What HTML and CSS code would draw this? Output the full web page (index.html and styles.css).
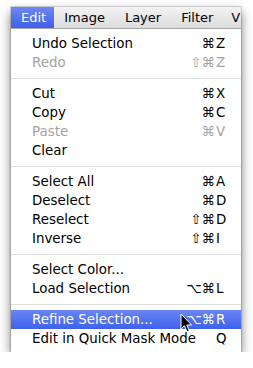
FILE: index.html
```html
<!DOCTYPE html>
<html>
<head>
<meta charset="utf-8">
<link rel="stylesheet" href="styles.css">
</head>
<body>
<div class="window">
  <div class="bar">
    <span class="title active">Edit</span>
    <span class="title">Image</span>
    <span class="title">Layer</span>
    <span class="title">Filter</span>
    <span class="title last">V</span>
  </div>
  <ul class="menu">
    <li class="item"><span class="label">Undo Selection</span><span class="sc"><span class="mods">⌘</span><span class="key">Z</span></span></li>
    <li class="item disabled"><span class="label">Redo</span><span class="sc"><span class="mods">⇧⌘</span><span class="key">Z</span></span></li>
    <li class="sep"></li>
    <li class="item"><span class="label">Cut</span><span class="sc"><span class="mods">⌘</span><span class="key">X</span></span></li>
    <li class="item"><span class="label">Copy</span><span class="sc"><span class="mods">⌘</span><span class="key">C</span></span></li>
    <li class="item disabled"><span class="label">Paste</span><span class="sc"><span class="mods">⌘</span><span class="key">V</span></span></li>
    <li class="item"><span class="label">Clear</span></li>
    <li class="sep"></li>
    <li class="item"><span class="label">Select All</span><span class="sc"><span class="mods">⌘</span><span class="key">A</span></span></li>
    <li class="item"><span class="label">Deselect</span><span class="sc"><span class="mods">⌘</span><span class="key">D</span></span></li>
    <li class="item"><span class="label">Reselect</span><span class="sc"><span class="mods">⇧⌘</span><span class="key">D</span></span></li>
    <li class="item"><span class="label">Inverse</span><span class="sc"><span class="mods">⇧⌘</span><span class="key">I</span></span></li>
    <li class="sep"></li>
    <li class="item"><span class="label">Select Color...</span></li>
    <li class="item"><span class="label">Load Selection</span><span class="sc"><span class="mods">⌥⌘</span><span class="key">L</span></span></li>
    <li class="sep"></li>
    <li class="item selected"><span class="label">Refine Selection...</span><span class="sc"><span class="mods">⌥⌘</span><span class="key">R</span></span>
      <svg class="cursor" width="13" height="21" viewBox="0 0 13 21"><path d="M1 1 L1 16 L4.5 12.8 L7 18.8 L9.3 17.8 L6.9 12 L11.5 12 Z" fill="#000" stroke="#fff" stroke-width="1" stroke-linejoin="round"/></svg>
    </li>
    <li class="item"><span class="label">Edit in Quick Mask Mode</span><span class="sc"><span class="mods"></span><span class="key">Q</span></span></li>
  </ul>
</div>
</body>
</html>
```
FILE: styles.css
```css
html, body {
  margin: 0;
  padding: 0;
  background: #ffffff;
}
body {
  padding: 7px 0 0 11px;
  font-family: "DejaVu Sans", "Liberation Sans", sans-serif;
  font-size: 13.4px;
  color: #000;
}
.window {
  width: 230px;
  box-shadow: 0 0 0 1px rgba(0,0,0,0.14), 0 5px 10px rgba(0,0,0,0.55);
  background: #fff;
}
.bar {
  height: 21px;
  display: flex;
  align-items: stretch;
  overflow: hidden;
  white-space: nowrap;
  background: linear-gradient(#f3f3f3, #dcdcdc);
  border-bottom: 1px solid #a8a8a8;
}
.title {
  display: flex;
  align-items: center;
  padding: 0 10px;
  font-size: 13px;
  flex: none;
}
.title.active {
  background: linear-gradient(#6d87f2, #3e5ee9);
  color: #fff;
  padding: 0 8px 0 10px;
}
.title.last {
  padding-left: 8px;
  padding-right: 0;
}
.menu {
  list-style: none;
  margin: 0;
  padding: 5px 0 4px 0;
  background: rgba(255,255,255,0.97);
}
.item {
  position: relative;
  height: 19px;
  display: flex;
  align-items: center;
  padding: 0 12px 0 21px;
  white-space: nowrap;
}
.label { flex: 1; }
.sc {
  display: flex;
  align-items: center;
}
.mods { text-align: right; }
.key {
  width: 13px;
  margin-left: 1px;
  text-align: left;
}
.disabled { color: #a3a3a3; }
.sep {
  height: 12px;
  display: flex;
  align-items: center;
}
.sep::after {
  content: "";
  flex: 1;
  height: 1px;
  background: #dddddd;
}
.selected {
  background: linear-gradient(#6a86f4, #3f60ec);
  color: #fff;
}
.cursor {
  position: absolute;
  left: 169px;
  top: 3px;
}
```
